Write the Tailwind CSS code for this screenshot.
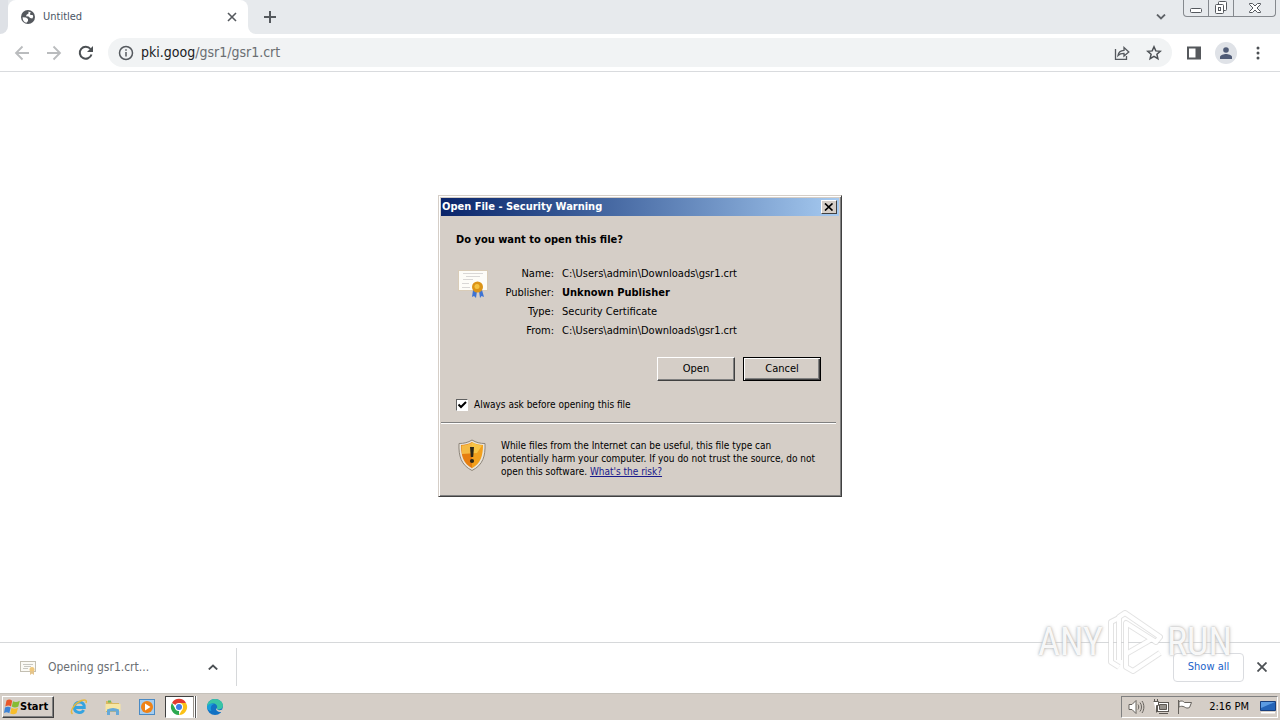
<!DOCTYPE html>
<html lang="en">
<head>
<meta charset="utf-8">
<title>Untitled</title>
<script src="https://cdn.jsdelivr.net/npm/@tailwindcss/browser@4"></script>
</head>
<body class="h-screen overflow-hidden bg-white font-['DejaVu_Sans_Condensed','Noto_Sans',sans-serif] text-[11px] text-black">
<div class="relative flex h-full flex-col">

  <header class="shrink-0">
    <div class="flex h-[34px] items-stretch bg-[#e7eaed]">
      <div class="w-2 bg-white"><div class="h-full rounded-br-lg bg-[#dee1e6]"></div></div>
      <div class="flex w-60 items-center rounded-t-lg bg-white pr-2 pl-3">
        <svg class="mr-[7px] size-4" viewBox="0 0 16 16"><circle cx="8" cy="8" r="7" fill="#55595e"/><path fill="#fff" d="M2.600 8.200 6 8.400l2 1.600v2l-1.500 1.800C4 13.300 2.500 11 2.600 8.200zM8.500 2.600v1.900L6.600 5.800 6 7.300l2.600.2 1.500 1.600 2.200.4.900-1.700-.5-1.900-2.200.2-.6-1.300 1-1.400z"/></svg>
        <span class="grow text-gray-600">Untitled</span>
        <button class="flex size-4 items-center justify-center" aria-label="Close tab"><svg class="size-2.5" viewBox="0 0 10 10" fill="none" stroke="#55595e" stroke-width="1.600"><path d="m1 1 8 8M9 1 1 9"/></svg></button>
      </div>
      <div class="w-2 bg-white"><div class="h-full rounded-bl-lg bg-[#e7eaed]"></div></div>
      <button class="flex w-7 items-center justify-center" aria-label="New tab"><svg class="size-3" viewBox="0 0 12 12" fill="none" stroke="#55595e" stroke-width="2"><path d="M6 0v12M0 6h12"/></svg></button>
      <div class="grow"></div>
      <button class="mr-[17px] flex items-center" aria-label="Search tabs"><svg class="h-1.5 w-2.5" viewBox="0 0 10 6" fill="none" stroke="#5f6368" stroke-width="1.800"><path d="m1 .5 4 4 4-4"/></svg></button>
      <div class="mr-1 flex h-[17px] w-[93px] rounded-b border border-t-0 border-[#85898e]">
        <button class="flex w-[25px] items-center justify-center border-r border-[#85898e]" aria-label="Minimize"><svg class="h-4 w-3" viewBox="0 0 12 16" fill="#fff" stroke="#55595e"><rect x=".5" y="8.500" width="11" height="4" rx="1"/></svg></button>
        <button class="flex w-[25px] items-center justify-center border-r border-[#85898e]" aria-label="Restore"><svg class="size-3.5" viewBox="0 0 14 14" fill="#fff" stroke="#55595e"><rect x="4.500" y=".5" width="8" height="9" rx="1"/><rect x="1.500" y="3.500" width="8" height="9" rx="1"/><rect x="4.500" y="6.500" width="2" height="3"/></svg></button>
        <button class="flex grow items-center justify-center" aria-label="Close window"><svg class="h-2.5 w-3" viewBox="0 0 12 10" fill="#fff" stroke="#55595e"><path d="M.5.500h3L6 3 8.500.500h3v1L8 5l3.500 3.500v1h-3L6 7 3.500 9.500h-3v-1L4 5 .5 1.500z"/></svg></button>
      </div>
    </div>

    <div class="flex h-[38px] items-center border-b border-[#d9dbde] bg-white pr-3.5 pl-3.5">
      <button class="mr-4 size-4" aria-label="Back"><svg class="size-4" viewBox="0 0 16 16" fill="none" stroke="#babcbe" stroke-width="1.800"><path d="M15 8H2M8.500 1.500 2 8l6.500 6.500"/></svg></button>
      <button class="mr-4 size-4" aria-label="Forward"><svg class="size-4" viewBox="0 0 16 16" fill="none" stroke="#babcbe" stroke-width="1.800"><path d="M1 8h13M7.500 1.500 14 8l-6.500 6.500"/></svg></button>
      <button class="mr-3.5 size-4" aria-label="Reload"><svg class="size-4" viewBox="0 0 16 16" fill="none" stroke="#4c5054" stroke-width="2"><path d="M13.500 9.500A6 6 0 1 1 12.500 4"/><path fill="#4c5054" stroke="none" d="M15 1v6H9z"/></svg></button>
      <div class="flex h-[29px] grow items-center rounded-full bg-[#f1f3f4] px-2.5">
        <svg class="mr-[7px] size-4" viewBox="0 0 16 16" fill="none" stroke="#55595e" stroke-width="1.500"><circle cx="8" cy="8" r="6.500"/><path d="M8 7v4.500M8 4.200v1.600"/></svg>
        <div class="grow text-[14px] text-[#6a6e72]"><span class="text-[#202124]">pki.goog</span>/gsr1/gsr1.crt</div>
        <button class="mr-4 size-4" aria-label="Share"><svg class="size-4" viewBox="0 0 16 16" fill="none" stroke="#55595e" stroke-width="1.300"><path d="M1.500 4v10.300h11V11"/><path d="M4 10.500c.5-3.500 2.500-5 6-5.200V2.500L14.800 7 10 11V8.300c-2.500 0-4.500.5-6 2.200z"/></svg></button>
        <button class="size-4" aria-label="Bookmark"><svg class="size-4" viewBox="0 0 16 16" fill="none" stroke="#4c5054" stroke-width="1.500"><path d="m8 1.800 1.800 4.100 4.500.4-3.400 3 1 4.400L8 11.400l-3.900 2.300 1-4.400-3.400-3 4.500-.4z"/></svg></button>
      </div>
      <button class="ml-3.5 size-4" aria-label="Side panel"><svg class="size-4" viewBox="0 0 16 16"><path fill="#55585c" fill-rule="evenodd" d="M1 1.500h14v13H1zm2 2v9h6.500v-9z"/></svg></button>
      <button class="ml-[13px] flex size-[22px] items-end justify-center rounded-full bg-[#dfe2e7] pb-[5px]" aria-label="Profile"><svg class="size-3" viewBox="0 0 12 12" fill="#4f5b76"><circle cx="6" cy="3" r="2.800"/><path d="M0 12v-2c0-2 4-3 6-3s6 1 6 3v2z"/></svg></button>
      <button class="ml-[13px] size-4" aria-label="Menu"><svg class="size-4" viewBox="0 0 16 16" fill="#4c5054"><circle cx="8" cy="3" r="1.500"/><circle cx="8" cy="8" r="1.500"/><circle cx="8" cy="13" r="1.500"/></svg></button>
    </div>
  </header>

  <main class="grow bg-white"></main>

  <section class="flex h-[51px] shrink-0 items-center border-t border-[#d6d8da] bg-white pr-3 pb-0.5" aria-label="Downloads">
    <svg class="ml-5 h-4 w-[17px]" viewBox="0 0 17 16"><rect x=".5" y="2.500" width="15" height="10" fill="#fbfaf5" stroke="#c3bfb2"/><path stroke="#c8c8c2" d="M3 5.500h10M4 7.500h7M3 9.500h5"/><circle cx="12" cy="10.500" r="2.500" fill="#efc77c"/><path fill="#e4c48c" d="M10 12h4v4l-2-1.500-2 1.500z"/></svg>
    <div class="ml-[11px] w-40 text-[12px] text-[#6a6e72]">Opening gsr1.crt...</div>
    <button class="flex h-6 w-3 items-center" aria-label="Download options"><svg class="h-1.5 w-2.5" viewBox="0 0 10 6" fill="none" stroke="#4c5054" stroke-width="1.800"><path d="m.8 5.500 4.200-4 4.200 4"/></svg></button>
    <div class="ml-4 h-[38px] w-px bg-[#d6d8da]"></div>
    <div class="grow"></div>
    <button class="mr-3 h-[29px] w-[71px] rounded border border-[#dadce0] text-[#1a62c9]">Show all</button>
    <button class="flex size-3 items-center justify-center" aria-label="Close downloads"><svg class="size-2.5" viewBox="0 0 10 10" fill="none" stroke="#4c5054" stroke-width="1.800"><path d="m.5.500 9 9M9.500.500l-9 9"/></svg></button>
  </section>

  <footer class="flex h-[27px] shrink-0 items-center border-t border-[#c6c2bb] bg-[#d5cec7] pr-0.5 pl-0.5">
    <button class="mr-3 flex h-[22px] w-[52px] items-center border border-t-white border-r-[#404040] border-b-[#404040] border-l-white pl-px font-bold shadow-[inset_-1px_-1px_#808080]">
      <svg class="size-4" viewBox="0 0 16 16"><path fill="#e8572a" d="M2.500 1.500c2-1.300 3.700-1.200 5.700.2L7 7.500C5.500 6.300 3.500 6.300 1.300 7.500z"/><path fill="#86bc34" d="M9 2.300c2 1 4 .9 6.800-.5l-1.500 5.700c-2.300 1.200-4.500 1.200-6.500 0z"/><path fill="#3d83d6" d="M1 8.500c2.200-1.200 4-1.100 5.700 0l-1.400 5.700c-1.800-1.300-3.500-1.200-5.300-.2z"/><path fill="#f7bd2a" d="M7.500 8.800c2 1.200 4.200 1.200 6.500 0l-1.500 5.400c-2.200 1.300-4.200 1.300-6.300.2z"/></svg>Start</button>
    <nav class="flex items-center" aria-label="Taskbar">
      <button class="flex w-[34px] justify-center pr-2" aria-label="Internet Explorer"><svg class="size-[18px]" viewBox="0 0 18 18" fill="none"><path stroke="#35a3e0" stroke-width="2.800" d="M4.500 9.500h9.800c0-3.500-2.200-5.300-5-5.300-3 0-5 2.300-5 5.300 0 5.500 7.500 6.800 9.300 2.500"/><path stroke="#e7b83d" stroke-width="1.500" d="M2.500 16C-1 13 5 5 11.500 2.500c4-1.500 5.500 0 4.500 2.500"/></svg></button>
      <button class="flex w-[34px] justify-center pr-2" aria-label="Explorer"><svg class="size-[18px]" viewBox="0 0 18 18"><path fill="#d9b860" d="M2 3h5l1.500 2H15v9H2z"/><path fill="#6dbb5c" d="M4 2.500h3v2H4z"/><path fill="#f6e6a3" d="M1.500 6h15v7h-15z"/><path fill="#66a9d8" d="M3 11.500q6-3 12 0V17h-3v-3.500H6V17H3z"/></svg></button>
      <button class="flex w-[34px] justify-center pr-2" aria-label="Media Player"><svg class="size-[18px]" viewBox="0 0 18 18"><rect x="1.500" y="1.500" width="15" height="15" fill="#a5cdf0" stroke="#4a8ac4"/><circle cx="9" cy="9" r="6" fill="#ef8216"/><path fill="#fff" d="m7 5.500 5.500 3.500L7 12.500z"/></svg></button>
      <button class="mr-2 -ml-[3px] flex h-[22px] w-[29px] items-center border border-t-[#404040] border-r-[#9b958e] border-b-white border-l-[#404040] bg-white pl-1 shadow-[1px_0_#fff,2px_0_#555,3px_0_#fff]" aria-label="Chrome"><svg class="size-[18px]" viewBox="0 0 18 18"><path fill="#e33b2e" d="M9 9 2 5A8 8 0 0 1 16 5H9z"/><path fill="#fbc116" d="M9 5h7A8 8 0 0 1 9 17l3.500-6z"/><path fill="#2da94f" d="m2 5 3.500 6L9 13l0 4A8 8 0 0 1 2 5z"/><circle cx="9" cy="9" r="4" fill="#fff"/><circle cx="9" cy="9" r="3" fill="#3e7de8"/></svg></button>
      <button class="ml-1" aria-label="Edge"><svg class="size-[18px]" viewBox="0 0 18 18"><circle cx="9" cy="9" r="8" fill="#1272c4"/><path fill="#39c5a5" d="M1 9C1 4.500 4.500 1 9 1s8 3 8 6.500c0 2.500-2 4-4.500 4-1.500 0-2-.6-1.500-1.500C12 7 9 5 6.500 5.500 4 5.800 2 7.200 1 9z"/><path fill="#1aa0dc" d="M1 9c1-3 4-4.500 7-3-3 1-4 4-2.500 7C3 13 1 11 1 9z"/><path fill="#d5cec7" d="M10.500 10c0 2 3 3 5.800 1.500L17 9v3l-1 2c-4 .5-7-2-5.500-4z"/></svg></button>
    </nav>
    <div class="grow"></div>
    <div class="flex h-[22px] items-center border border-t-[#808080] border-r-white border-b-white border-l-[#808080] pr-px pl-1.5">
      <svg class="mr-2 h-4 w-[17px]" viewBox="0 0 17 16" fill="#fff" stroke="#66625d"><path d="M1 5.500h3l4-4v13l-4-4H1z"/><path fill="none" d="M10 5.500c1 1.500 1 3.500 0 5M12 3.500c2 2.500 2 6.500 0 9M14 2c2.500 3.500 2.500 8.500 0 12"/></svg>
      <svg class="mr-2 size-4" viewBox="0 0 16 16" fill="#fff" stroke="#5c5853"><rect x="4.500" y="3.500" width="11" height="9"/><path fill="#96928c" d="M6.500 5.500h7v5h-7z"/><path d="M6 14.500h9M.5 2.500h5v4h-2v7M1.500 0v2M4.500 0v2"/></svg>
      <svg class="mr-4 size-4" viewBox="0 0 16 16" fill="#fff" stroke="#66625d"><path d="M1.500 1v14M2 2.500c3-1 4-.5 5.500 1h7l-2 5c-2 1-3.500.5-5-.5-2-1-3.500-1-5.500 0z"/></svg>
      <time class="mr-[11px]">2:16 PM</time>
      <svg class="size-4" viewBox="0 0 16 16"><path fill="#2464b8" stroke="#183f7d" d="M.5 2.500h15v9H.5z"/><path fill="#5b9be2" d="M1 3h14L1 9z"/><path fill="#fff" d="M1 13h14v1.500H1z"/></svg>
    </div>
  </footer>

  <div class="absolute top-[195px] left-1/2 w-[404px] -translate-x-1/2 border border-t-[#d5cec7] border-r-[#404040] border-b-[#404040] border-l-[#d5cec7] bg-[#d5cec7] p-0.5 shadow-[inset_1px_1px_#fff,inset_-1px_-1px_#808080]" role="dialog" aria-labelledby="dialog-title">
    <div class="flex h-[18px] items-center bg-linear-to-r from-[#0a246a] to-[#a6caf0] pr-0.5 pl-px">
      <h1 id="dialog-title" class="grow font-bold text-white">Open File - Security Warning</h1>
      <button class="flex h-3.5 w-4 items-center justify-center border border-t-white border-r-[#404040] border-b-[#404040] border-l-white bg-[#d5cec7]" aria-label="Close"><svg class="h-2 w-2.5" viewBox="0 0 10 8" fill="none" stroke="#000" stroke-width="1.700"><path d="m1 .5 7.500 7M8.500.500 1 7.500"/></svg></button>
    </div>
    <div class="pt-4 pr-[18px] pb-[9px] pl-[15px]">
      <h2 class="leading-4 font-bold">Do you want to open this file?</h2>
      <div class="mt-[18px] flex">
        <svg class="h-[34px] w-8" viewBox="0 0 32 34"><rect x="2.500" y="4.500" width="29" height="20" fill="#fdfcf8" stroke="#d9ccb8"/><path stroke="#c9c8c8" stroke-opacity=".7" d="M7 7.500h20M10 10.500h14M7 13.500h10M6 17.500h7M6 21.500h8"/><path fill="#3d73d4" d="m17 24 4 1-1 7-2-2-2 1zM23 25l3-1 2 7-2.500-1L24 32z"/><circle cx="21.500" cy="21" r="5.500" fill="#dc9417"/><circle cx="21" cy="20.500" r="2.500" fill="#f6c340"/></svg>
        <dl class="grid grid-cols-[66px_1fr] gap-x-2 gap-y-[3px] leading-4">
          <dt class="text-right">Name:</dt><dd>C:\Users\admin\Downloads\gsr1.crt</dd>
          <dt class="text-right">Publisher:</dt><dd class="font-bold">Unknown Publisher</dd>
          <dt class="text-right">Type:</dt><dd>Security Certificate</dd>
          <dt class="text-right">From:</dt><dd>C:\Users\admin\Downloads\gsr1.crt</dd>
        </dl>
      </div>
      <div class="mt-[18px] flex justify-end gap-2">
        <button class="h-6 w-[78px] border border-t-white border-r-[#404040] border-b-[#404040] border-l-white shadow-[inset_-1px_-1px_#808080]">Open</button>
        <button class="h-6 w-[78px] border border-black shadow-[inset_1px_1px_#fff,inset_-1px_-1px_#404040,inset_-2px_-2px_#808080]">Cancel</button>
      </div>
      <label class="mt-4 flex items-center gap-1.5 text-[10px] leading-4">
        <span class="relative size-3">
          <input type="checkbox" checked class="block size-3 appearance-none border border-t-[#606060] border-r-white border-b-white border-l-[#606060] bg-white">
          <svg class="pointer-events-none absolute inset-0 size-3" viewBox="0 0 12 12" fill="none" stroke="#000" stroke-width="2"><path d="m2.500 5.500 2.500 2.500 5-5"/></svg>
        </span>
        Always ask before opening this file
      </label>
    </div>
    <div class="mr-[3px] h-0.5 border-t border-b border-t-[#808080] border-b-white"></div>
    <div class="flex pt-[15px] pr-3 pb-4 pl-4">
      <svg class="mr-3.5 h-8 w-[30px] shrink-0" viewBox="0 0 30 32"><path fill="#e9e4da" stroke="#8d857a" d="M15 1c4 2.500 8 3.500 13 3.500C28.500 17 26 26 15 31.500 4 26 1.500 17 2 4.500 7 4.500 11 3.500 15 1z"/><path fill="#f2a01c" d="M15 3c4 2.300 7 3 11 3 0 11-2.500 18.500-11 23.300z"/><path fill="#e67e10" d="M15 3C11 5.300 8 6 4 6c0 11 2.500 18.500 11 23.300z"/><path fill="#fbd45a" d="M15 3.500c4 2 7 3 10 3L20 14 5 15 4.500 6.500c4 0 7-1 10.500-3z" opacity=".7"/><path fill="#2b2618" d="M13 8h4l-.8 10h-2.400z"/><circle cx="15" cy="22" r="2.100" fill="#2b2618"/></svg>
      <p class="text-[10px] leading-[13px] whitespace-nowrap">While files from the Internet can be useful, this file type can<br>potentially harm your computer. If you do not trust the source, do not<br>open this software. <a href="#" class="text-[#1a1a8c] underline">What's the risk?</a></p>
    </div>
  </div>

  <div class="pointer-events-none absolute right-12 bottom-[46px] flex items-center gap-1 font-['Roboto_Condensed','Open_Sans_Condensed',Roboto,sans-serif] text-[38px] leading-none text-white/90 [text-shadow:0_0_2px_#aaa,0_0_4px_#ccc]">
    <span>ANY</span>
    <svg class="h-16 w-14" viewBox="0 0 56 64" fill="none" stroke-linejoin="round"><g stroke="#d0d0d0" stroke-opacity=".6" stroke-width="6"><path d="M12 57 4 52V12l8-4M19 44v13l7 4 27-18M12 50V7l6-4 35 24-4 5-30-19v31l26-15"/></g><g stroke="#fff" stroke-width="4"><path d="M12 57 4 52V12l8-4M19 44v13l7 4 27-18M12 50V7l6-4 35 24-4 5-30-19v31l26-15"/></g></svg>
    <span>RUN</span>
  </div>
</div>
</body>
</html>
